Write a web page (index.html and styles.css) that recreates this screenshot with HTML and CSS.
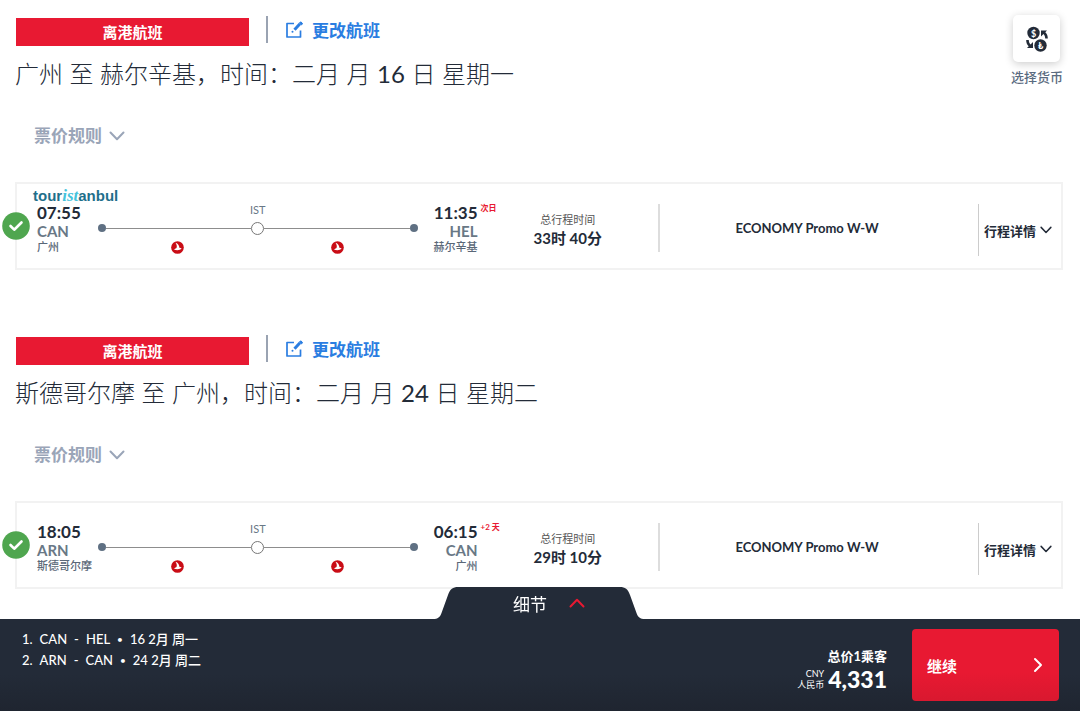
FILE: index.html
```html
<!DOCTYPE html>
<html lang="zh-CN">
<head>
  <meta charset="UTF-8">
  <meta name="viewport" content="width=device-width, initial-scale=1.0">
  <title>离港航班</title>
  <link rel="stylesheet" href="styles.css">
</head>
<body>

  <!-- shared icons -->
  <svg class="sprite" aria-hidden="true">
    <symbol id="edit" viewBox="0 0 18 18">
      <path d="M9 2.500H2v13.500h13.500V9.500" fill="none" stroke="currentColor" stroke-width="1.700" stroke-linejoin="round"/>
      <path d="M9.500 8.800l5.500-6" fill="none" stroke="currentColor" stroke-width="3"/>
      <path d="M14.500 2l1.200-1.200 2 1.800-1.200 1.300z" fill="currentColor" stroke="currentColor"/>
      <circle cx="7.500" cy="10.800" r="1" fill="currentColor"/>
    </symbol>
    <symbol id="chevron" viewBox="0 0 16 10">
      <path d="M1.500 1.500L8 8.200l6.500-6.700" fill="none" stroke="currentColor" stroke-width="2" stroke-linecap="round" stroke-linejoin="round"/>
    </symbol>
    <symbol id="check" viewBox="0 0 28 28">
      <circle cx="14" cy="14" r="13.800" fill="#4fa64f"/>
      <path d="M8.500 14l3.700 3.700 7.300-7.200" fill="none" stroke="#fff" stroke-width="2.600" stroke-linecap="round" stroke-linejoin="round"/>
    </symbol>
    <symbol id="airline" viewBox="0 0 14 14">
      <circle cx="7" cy="7" r="6.800" fill="#c90d16"/>
      <path d="M4.800 1.800C7.500 2.800 9 4.800 9 7.200c1 .1 1.800.5 2.500 1.200-1.300 1-2.800 1.500-4.500 1.500-1.600 0-3-.4-4.200-1.300 1.700 0 2.900-.5 3.300-1.600.5-1.500 0-3.300-1.300-5.200z" fill="#fff"/>
    </symbol>
  </svg>

  <main>
    <section class="flight">
      <div class="flight-head">
        <span class="tag">离港航班</span>
        <a href="#" class="change"><svg><use href="#edit"/></svg>更改航班</a>
      </div>
      <h2>广州 至 赫尔辛基，时间：二月 月 <b>16</b> 日 星期一</h2>
      <button class="rules" type="button">票价规则 <svg><use href="#chevron"/></svg></button>

      <div class="card">
        <svg class="selected"><use href="#check"/></svg>
        <span class="touristanbul">tour<i>ist</i>anbul</span>
        <div class="journey">
          <div class="stop">
            <span class="time">07:55</span>
            <span class="code">CAN</span>
            <span class="city">广州</span>
          </div>
          <div class="route">
            <span class="via">IST</span>
            <div class="track"><i class="dot"></i><i class="line"></i><i class="ring"></i><i class="line"></i><i class="dot"></i></div>
            <div class="carriers"><svg><use href="#airline"/></svg><svg><use href="#airline"/></svg></div>
          </div>
          <div class="stop arrival">
            <span class="time">11:35<sup>次日</sup></span>
            <span class="code">HEL</span>
            <span class="city">赫尔辛基</span>
          </div>
        </div>
        <div class="duration">
          <span>总行程时间</span>
          <strong>33时 40分</strong>
        </div>
        <div class="fare">ECONOMY Promo W-W</div>
        <button class="details" type="button">行程详情 <svg><use href="#chevron"/></svg></button>
      </div>
    </section>

    <section class="flight">
      <div class="flight-head">
        <span class="tag">离港航班</span>
        <a href="#" class="change"><svg><use href="#edit"/></svg>更改航班</a>
      </div>
      <h2>斯德哥尔摩 至 广州，时间：二月 月 <b>24</b> 日 星期二</h2>
      <button class="rules" type="button">票价规则 <svg><use href="#chevron"/></svg></button>

      <div class="card">
        <svg class="selected"><use href="#check"/></svg>
        <div class="journey">
          <div class="stop">
            <span class="time">18:05</span>
            <span class="code">ARN</span>
            <span class="city">斯德哥尔摩</span>
          </div>
          <div class="route">
            <span class="via">IST</span>
            <div class="track"><i class="dot"></i><i class="line"></i><i class="ring"></i><i class="line"></i><i class="dot"></i></div>
            <div class="carriers"><svg><use href="#airline"/></svg><svg><use href="#airline"/></svg></div>
          </div>
          <div class="stop arrival">
            <span class="time">06:15<sup>+2 天</sup></span>
            <span class="code">CAN</span>
            <span class="city">广州</span>
          </div>
        </div>
        <div class="duration">
          <span>总行程时间</span>
          <strong>29时 10分</strong>
        </div>
        <div class="fare">ECONOMY Promo W-W</div>
        <button class="details" type="button">行程详情 <svg><use href="#chevron"/></svg></button>
      </div>
    </section>
  </main>

  <button class="currency" type="button">
    <span class="currency-icon">
      <svg viewBox="0 0 24 26">
        <circle cx="8.500" cy="7" r="6.200" fill="#232b38"/>
        <circle cx="15.500" cy="19.500" r="6.200" fill="#232b38"/>
        <text x="8.500" y="10.500">$</text>
        <text x="15.500" y="23">₺</text>
        <path d="M16 4.500h6l-1.700 1.700c1.700 1.700 2.600 3.700 2.500 6.300h-2.600c0-1.700-.6-3.200-1.700-4.500L16 10.500z" fill="#232b38"/>
        <path d="M8 22H2l1.700-1.700C2 18.600 1.100 16.600 1.200 14h2.600c0 1.700.6 3.200 1.700 4.500L8 16z" fill="#232b38"/>
      </svg>
    </span>
    选择货币
  </button>

  <footer>
    <button class="tab" type="button">
      <svg class="tab-shape" viewBox="0 0 212 32" preserveAspectRatio="none"><path d="M0 32c5 0 7-2 8.500-6L15 8c2-6 5-8 10-8h162c5 0 8 2 10 8l6.500 18c1.500 4 3.500 6 8.500 6z" fill="#232b38"/></svg>
      <span>细节</span>
      <svg class="arrow-up"><use href="#chevron"/></svg>
    </button>
    <ol>
      <li><span>1.</span><span>CAN</span><span>-</span><span>HEL</span><span class="bullet">•</span><span>16 2月 周一</span></li>
      <li><span>2.</span><span>ARN</span><span>-</span><span>CAN</span><span class="bullet">•</span><span>24 2月 周二</span></li>
    </ol>
    <div class="total">
      <span class="total-label">总价1乘客</span>
      <div class="price">
        <span class="unit">CNY<br>人民币</span>
        <strong>4,331</strong>
      </div>
    </div>
    <button class="continue" type="button">继续
      <svg viewBox="0 0 10 16"><path d="M2 2l6 6-6 6" fill="none" stroke="#fff" stroke-width="2" stroke-linecap="round" stroke-linejoin="round"/></svg>
    </button>
  </footer>

</body>
</html>
```

FILE: styles.css
```css
* {
  box-sizing: border-box;
}
body {
  margin: 0;
  padding-bottom: 92px;
  font-family: Lato, 'Noto Sans CJK SC', sans-serif;
  background: #fff;
  color: #232b38;
}
button {
  font-family: inherit;
  color: inherit;
  background: none;
  border: none;
  padding: 0;
  cursor: pointer;
}
.sprite {
  display: none;
}
main {
  padding: 16px 17px 0 15px;
}
.flight + .flight {
  margin-top: 65px;
}
.flight-head {
  display: flex;
  height: 30px;
  padding-left: 1px;
}
.tag {
  width: 233px;
  margin-top: 2px;
  background: #e81932;
  color: #fff;
  font-size: 15px;
  font-weight: bold;
  line-height: 28px;
  text-align: center;
}
.change {
  display: flex;
  align-items: center;
  gap: 9px;
  height: 27px;
  margin-left: 17px;
  padding-left: 17px;
  border-left: 2px solid #9aa3b2;
  color: #2a7de1;
  font-size: 17px;
  font-weight: bold;
  text-decoration: none;
}
.change svg {
  width: 18px;
  height: 18px;
}
h2 {
  margin: 12px 0 34px;
  font-size: 24px;
  font-weight: 300;
  line-height: 32px;
}
h2 b {
  font-weight: 400;
}
.rules {
  display: flex;
  align-items: center;
  gap: 7px;
  margin-left: 19px;
  color: #9aa5b8;
  font-size: 17px;
  font-weight: bold;
  line-height: 24px;
}
.rules svg {
  width: 16px;
  height: 10px;
}

/* flight card */
.card {
  position: relative;
  display: grid;
  grid-template-columns: 462fr 181fr 321fr 83px;
  height: 88px;
  margin-top: 34px;
  border: 2px solid #f2f2f2;
}
.selected {
  position: absolute;
  left: -15px;
  top: 28px;
  width: 28px;
  height: 28px;
}
.touristanbul {
  position: absolute;
  left: 16px;
  top: 4px;
  color: #1f6f8b;
  font-family: 'Liberation Sans', Arial, sans-serif;
  font-size: 15px;
  font-weight: bold;
  line-height: 16px;
}
.touristanbul i {
  color: #45c3dc;
  font-family: 'Liberation Serif', serif;
  font-size: 17px;
  line-height: 16px;
}
.journey {
  display: flex;
  padding: 20px 0 0 20px;
}
.stop {
  display: flex;
  flex-direction: column;
  width: 61px;
}
.arrival {
  width: auto;
  align-items: flex-end;
}
.time {
  position: relative;
  font-size: 17px;
  font-weight: bold;
  line-height: 18px;
}
.time sup {
  position: absolute;
  left: 100%;
  top: -2px;
  margin-left: 3px;
  color: #e81932;
  font-size: 8px;
  line-height: 12px;
  white-space: nowrap;
}
.code {
  color: #697886;
  font-size: 15px;
  font-weight: bold;
  line-height: 18px;
}
.city {
  color: #5a6878;
  font-size: 11px;
  font-weight: 500;
  line-height: 13px;
  white-space: nowrap;
}
.route {
  flex: 1;
  margin-right: 16px;
}
.via {
  display: block;
  color: #697886;
  font-size: 11px;
  line-height: 11px;
  text-align: center;
}
.track {
  display: flex;
  align-items: center;
  height: 26px;
}
.dot {
  width: 8px;
  height: 8px;
  border-radius: 50%;
  background: #5f7083;
}
.line {
  flex: 1;
  height: 1px;
  background: #8d8d8d;
}
.ring {
  width: 13px;
  height: 13px;
  border: 1px solid #777;
  border-radius: 50%;
}
.carriers {
  display: flex;
  justify-content: space-around;
}
.carriers svg {
  width: 13px;
  height: 13px;
}
.duration {
  display: flex;
  flex-direction: column;
  align-items: center;
  padding-top: 27px;
  color: #555;
  font-size: 11px;
  line-height: 18px;
}
.duration strong {
  color: #232b38;
  font-size: 15px;
}
.fare {
  height: 48px;
  margin-top: 20px;
  padding-right: 24px;
  border-left: 2px solid #ddd;
  font-size: 13px;
  font-weight: bold;
  line-height: 48px;
  text-align: center;
}
.details {
  display: flex;
  align-items: center;
  gap: 4px;
  height: 52px;
  margin-top: 20px;
  padding-left: 5px;
  border-left: 1px solid #ccc;
  font-size: 13px;
  font-weight: bold;
  white-space: nowrap;
}
.details svg {
  width: 12px;
  height: 8px;
}

/* currency switcher */
.currency {
  position: absolute;
  top: 15px;
  right: 17px;
  display: flex;
  flex-direction: column;
  align-items: center;
  gap: 6px;
  color: #5a6b80;
  font-size: 13px;
  font-weight: 500;
  line-height: 18px;
}
.currency-icon {
  display: flex;
  align-items: center;
  justify-content: center;
  width: 47px;
  height: 47px;
  border-radius: 5px;
  background: #fff;
  box-shadow: 0 2px 8px rgba(0, 0, 0, 0.2);
}
.currency-icon svg {
  width: 24px;
  height: 26px;
}
.currency-icon text {
  fill: #fff;
  font-size: 9px;
  font-weight: bold;
  text-anchor: middle;
}

/* bottom bar */
footer {
  position: fixed;
  left: 0;
  right: 0;
  bottom: 0;
  display: flex;
  height: 92px;
  padding: 10px 21px 10px 22px;
  background: linear-gradient(#232b38 60%, #1f2530);
  color: #fff;
}
.tab {
  position: absolute;
  left: 50%;
  bottom: 100%;
  display: flex;
  align-items: center;
  justify-content: center;
  gap: 22px;
  width: 212px;
  height: 32px;
  margin-left: -107px;
  padding-left: 20px;
  color: #fff;
  font-size: 17px;
}
.tab-shape {
  position: absolute;
  left: 0;
  top: 0;
  width: 100%;
  height: 100%;
}
.tab span {
  position: relative;
}
.arrow-up {
  position: relative;
  width: 16px;
  height: 10px;
  color: #e81932;
  transform: rotate(180deg);
}
ol {
  flex: 1;
  margin: 0;
  padding: 0;
  list-style: none;
  font-size: 13px;
  font-weight: 500;
  line-height: 21px;
}
li {
  display: flex;
  gap: 7px;
}
.bullet {
  font-size: 10px;
}
.total {
  display: flex;
  flex-direction: column;
  align-items: flex-end;
  padding-top: 18px;
  margin-right: 25px;
}
.total-label {
  font-size: 13px;
  font-weight: bold;
  line-height: 18px;
}
.price {
  display: flex;
  align-items: center;
  gap: 4px;
}
.price strong {
  font-size: 23px;
  font-weight: 900;
  line-height: 28px;
}
.unit {
  font-size: 9px;
  line-height: 11px;
  text-align: right;
}
.continue {
  display: flex;
  align-items: center;
  justify-content: space-between;
  width: 147px;
  padding: 0 16px 0 15px;
  border-radius: 4px;
  background: linear-gradient(#e81932 60%, #d9182f);
  color: #fff;
  font-size: 15px;
  font-weight: bold;
}
.continue svg {
  width: 10px;
  height: 16px;
}
```
